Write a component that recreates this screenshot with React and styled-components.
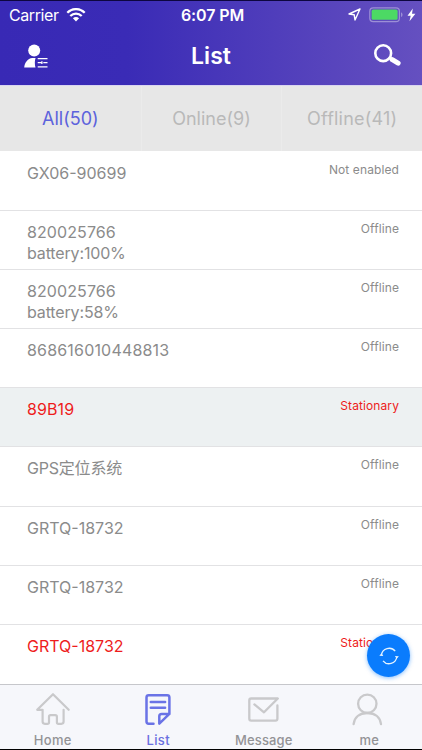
import React from 'react';
import styled, { createGlobalStyle } from 'styled-components';

const devices = [
    { id: 1, name: 'GX06-90699', status: 'Not enabled' },
    { id: 2, name: '820025766', battery: '100%', status: 'Offline', spacing: '0.1px' },
    { id: 3, name: '820025766', battery: '58%', status: 'Offline', spacing: '0.1px' },
    { id: 4, name: '868616010448813', status: 'Offline', spacing: '0.18px' },
    { id: 5, name: '89B19', status: 'Stationary', active: true, selected: true, spacing: '0.1px' },
    { id: 6, name: 'GPS定位系统', status: 'Offline', spacing: '-0.2px' },
    { id: 7, name: 'GRTQ-18732', status: 'Offline' },
    { id: 8, name: 'GRTQ-18732', status: 'Offline' },
    { id: 9, name: 'GRTQ-18732', status: 'Stationary', active: true },
];

const WifiIcon = () => (
    <svg width="20" height="14" viewBox="0 0 20 14" fill="none" stroke="#fff" strokeWidth="2.3">
        <path d="M1.3 4.8C6.2-.1 13.8-.1 18.7 4.8" />
        <path d="M4.3 8C7.6 4.8 12.4 4.8 15.7 8" />
        <path d="M10 13.4 6.9 10.3Q10 7.7 13.1 10.3Z" fill="#fff" stroke="none" />
    </svg>
);

const LocationIcon = () => (
    <svg width="13" height="13" viewBox="0 0 13 13" fill="none" stroke="#fff" strokeWidth="1.4" strokeLinejoin="round">
        <path d="M12 1 1 6l5.2.8L7 12Z" />
    </svg>
);

const BatteryIcon = () => (
    <svg width="34" height="16" viewBox="0 0 34 16">
        <rect x="0.8" y="0.8" width="29.6" height="13.8" rx="3.4" fill="none" stroke="#9c8fd6" strokeWidth="1.2" />
        <rect x="2.6" y="2.6" width="26" height="10.2" rx="1.6" fill="#4cd964" />
        <path d="M32 5.3q1.6.8 1.6 2.4T32 10.1Z" fill="#9c8fd6" />
    </svg>
);

const BoltIcon = () => (
    <svg width="9" height="14" viewBox="0 0 9 14" fill="#fff">
        <path d="M5.8.5.5 7.7h3.2L2.5 13.3 8.4 5.7H5Z" />
    </svg>
);

const AccountIcon = () => (
    <svg width="25" height="25" viewBox="0 0 25 25" fill="#fff">
        <circle cx="10.2" cy="6.4" r="6" />
        <path d="M.2 23.6C.7 18.5 3.6 14.4 8.2 13.9h3.4c-1 2.1-1 6.7-.1 9.7Z" />
        <path d="M13.7 14.6h9.8M13.7 18.7h4M19.3 18.7h4.2M13.7 22.9h9.8M17.9 17.3v2.8" stroke="#fff" strokeWidth="1.3" />
    </svg>
);

const SearchIcon = () => (
    <svg width="29" height="24" viewBox="0 0 29 24" fill="none" stroke="#fff">
        <circle cx="10.2" cy="9.2" r="7.9" strokeWidth="2.6" />
        <path d="m16.4 13.6 3 2" strokeWidth="2.6" />
        <path d="m19.3 15.7 5.8 3.5" strokeWidth="5" strokeLinecap="round" />
    </svg>
);

const HomeIcon = () => (
    <svg width="36" height="34" viewBox="0 0 36 34" fill="none" stroke="currentColor" strokeWidth="2.2" strokeLinecap="round" strokeLinejoin="round">
        <path d="M2.2 17.8 18 2.2l15.7 15.6M2.2 17.8h5.4v11.8q0 2.2 2.2 2.2h2.6q1.6 0 1.6-1.6v-5.4q0-1.6 1.6-1.6h4.7q1.6 0 1.6 1.6v5.4q0 1.6 1.6 1.6h2.9q2.2 0 2.2-2.2V17.8" />
    </svg>
);

const ListIcon = () => (
    <svg width="36" height="34" viewBox="0 0 36 34" fill="none" stroke="currentColor" strokeWidth="2.5" strokeLinecap="round" strokeLinejoin="round">
        <path d="M13.5 31.8H8.7q-2.2 0-2.2-2.2V5.5q0-2.2 2.2-2.2h18.5q2.2 0 2.2 2.2v16.4L19.3 31.6v-7.4q0-2.3 2.3-2.3h7.8" />
        <path d="M10.8 10.1h14.3M10.8 15.8h14.3" />
    </svg>
);

const MessageIcon = () => (
    <svg width="36" height="34" viewBox="0 0 36 34" fill="none" stroke="currentColor" strokeWidth="2.3" strokeLinecap="round" strokeLinejoin="round">
        <path d="M8.4 12.4 18 20.3 31.8 6.5H5.2q-1.9 0-1.9 1.9v18.3q0 1.9 1.9 1.9h24.3q1.9 0 1.9-1.9V13.4" />
    </svg>
);

const MeIcon = () => (
    <svg width="36" height="34" viewBox="0 0 36 34" fill="none" stroke="currentColor" strokeWidth="2.3" strokeLinecap="round">
        <circle cx="16.3" cy="11.8" r="9.2" />
        <path d="M2.6 32.2C3.3 25.5 8.3 21 16.3 21s13 4.5 13.7 11.2" />
    </svg>
);

const RefreshIcon = () => (
    <svg width="22" height="20" viewBox="0 0 22 20" fill="none" stroke="#e6f4ff" strokeWidth="1.3">
        <path d="M3.4 9A7.8 7.8 0 0 1 17.2 5.2M18.8 11A7.8 7.8 0 0 1 5 14.8" />
        <path d="m1.3 9.7 2.3-2.4 1.7 2.6ZM20.9 10.3l-2.3 2.4-1.7-2.6Z" fill="#e6f4ff" stroke="none" />
    </svg>
);

const navItems = [
    { label: 'Home', icon: <HomeIcon />, spacing: '0.3px' },
    { label: 'List', icon: <ListIcon />, spacing: '0.4px', active: true },
    { label: 'Message', icon: <MessageIcon />, spacing: '0.1px' },
    { label: 'me', icon: <MeIcon />, spacing: '0.1px' },
];

const App = () => {
    return (
        <Screen>
            <GlobalStyle />
            <Header>
                <StatusBar>
                    <StatusGroup>
                        <Carrier>Carrier</Carrier>
                        <WifiIcon />
                    </StatusGroup>
                    <Clock>6:07 PM</Clock>
                    <StatusGroup $end>
                        <LocationIcon />
                        <BatteryIcon />
                        <BoltIcon />
                    </StatusGroup>
                </StatusBar>
                <TitleBar>
                    <IconButton aria-label="Account"><AccountIcon /></IconButton>
                    <Title>List</Title>
                    <IconButton aria-label="Search" $end><SearchIcon /></IconButton>
                </TitleBar>
            </Header>
            <Tabs>
                <Tab $active>All(50)</Tab>
                <Tab>Online(9)</Tab>
                <Tab $spacing="0.2px">Offline(41)</Tab>
            </Tabs>
            <DeviceList>
                {devices.map((device) => (
                    <DeviceRow key={device.id} $active={device.active} $selected={device.selected}>
                        <DeviceName $spacing={device.spacing}>
                            {device.name}
                            {device.battery && <Battery>battery:{device.battery}</Battery>}
                        </DeviceName>
                        <DeviceStatus>{device.status}</DeviceStatus>
                    </DeviceRow>
                ))}
            </DeviceList>
            <RefreshButton aria-label="Refresh"><RefreshIcon /></RefreshButton>
            <BottomNav>
                {navItems.map((item) => (
                    <NavItem key={item.label} $active={item.active}>
                        {item.icon}
                        <NavLabel $spacing={item.spacing}>{item.label}</NavLabel>
                    </NavItem>
                ))}
            </BottomNav>
        </Screen>
    );
};

export default App;

const GlobalStyle = createGlobalStyle`
  * {
    box-sizing: border-box;
  }

  body {
    margin: 0;
    font-family: Inter, "Noto Sans CJK SC", sans-serif;
  }

  svg {
    display: block;
    flex-shrink: 0;
  }

  button {
    padding: 0;
    border: none;
    background: none;
    font: inherit;
  }
`;

const Screen = styled.div`
  position: relative;
  display: flex;
  flex-direction: column;
  height: 750px;
  overflow: hidden;
  border-top: 1px solid #0d0640;
  border-bottom: 1px solid #000;
  background: #fff;
`;

const Header = styled.header`
  height: 84px;
  flex-shrink: 0;
  color: #fff;
  background: linear-gradient(90deg, #3829b5 0%, #3a2bb6 30%, #6550c0 100%);
`;

const StatusBar = styled.div`
  display: grid;
  grid-template-columns: 1fr auto 1fr;
  align-items: center;
  height: 27px;
  padding: 0 6px 0 9px;
`;

const StatusGroup = styled.div`
  display: flex;
  align-items: center;
  justify-content: ${({ $end }) => ($end ? 'flex-end' : 'flex-start')};
  gap: ${({ $end }) => ($end ? '4px' : '7px')};

  ${({ $end }) => $end && 'svg:first-child { margin-right: 4px; }'}
`;

const Carrier = styled.span`
  font-size: 16px;
  letter-spacing: -0.4px;
`;

const Clock = styled.span`
  font-size: 16px;
  font-weight: 600;
  letter-spacing: -0.1px;
`;

const TitleBar = styled.div`
  display: grid;
  grid-template-columns: 1fr auto 1fr;
  align-items: center;
  height: 56px;
  padding: 0 20px 0 24px;
`;

const IconButton = styled.button`
  justify-self: ${({ $end }) => ($end ? 'end' : 'start')};
`;

const Title = styled.h1`
  margin: 0 4px 0 0;
  font-size: 23px;
  font-weight: 600;
`;

const Tabs = styled.div`
  display: grid;
  grid-template-columns: repeat(3, 1fr);
  height: 66px;
  flex-shrink: 0;
  border-top: 1px solid #d9d5f0;
  background: #e7e7e7;
`;

const Tab = styled.button`
  font-size: 18px;
  letter-spacing: ${({ $spacing }) => $spacing || '0'};
  color: ${({ $active }) => ($active ? '#5c62dc' : '#b9b9b9')};

  & + & {
    border-left: 1px solid #ebebeb;
  }
`;

const DeviceList = styled.ul`
  flex: 1;
  display: grid;
  grid-template-rows: repeat(9, 1fr);
  margin: 0;
  padding: 0.5px 0 0;
  list-style: none;
`;

const DeviceRow = styled.li`
  display: flex;
  justify-content: space-between;
  padding: 11px 23px 0 27px;
  border-bottom: 1px solid #e2e2e4;
  color: ${({ $active }) => ($active ? '#ee1c1c' : '#8b8b8b')};
  background: ${({ $selected }) => ($selected ? '#edf1f2' : '#fff')};

  &:last-child {
    border-bottom: none;
  }
`;

const DeviceName = styled.div`
  font-size: 16px;
  line-height: 21px;
  letter-spacing: ${({ $spacing }) => $spacing || '0'};
`;

const Battery = styled.div`
  letter-spacing: -0.15px;
`;

const DeviceStatus = styled.span`
  font-size: 12px;
  line-height: 14px;
  letter-spacing: 0.1px;
`;

const RefreshButton = styled.button`
  position: absolute;
  right: 12px;
  bottom: 72px;
  display: flex;
  align-items: center;
  justify-content: center;
  width: 43px;
  height: 43px;
  border-radius: 50%;
  background: #0a7cfd;
  box-shadow: 0 1px 4px rgba(10, 124, 253, 0.5);
`;

const BottomNav = styled.nav`
  display: grid;
  grid-template-columns: repeat(4, 1fr);
  height: 65px;
  flex-shrink: 0;
  border-top: 1px solid #c6c7cb;
  background: #f6f7fb;
`;

const NavItem = styled.div`
  display: flex;
  flex-direction: column;
  align-items: center;
  padding-top: 7px;
  color: ${({ $active }) => ($active ? '#6a73e6' : '#c9c9cb')};

  span {
    color: ${({ $active }) => ($active ? '#6a6fe0' : '#939396')};
  }
`;

const NavLabel = styled.span`
  margin-top: 6px;
  font-size: 13px;
  font-weight: 500;
  line-height: 16px;
  letter-spacing: ${({ $spacing }) => $spacing};
`;
